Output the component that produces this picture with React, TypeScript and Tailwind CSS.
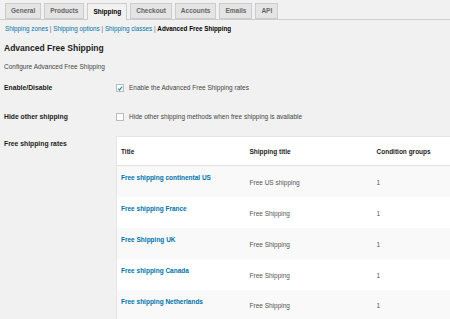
import React from "react";

const tabs = ["General", "Products", "Shipping", "Checkout", "Accounts", "Emails", "API"];

const rates = [
  { title: "Free shipping continental US", shipping: "Free US shipping", groups: 1 },
  { title: "Free shipping France", shipping: "Free Shipping", groups: 1 },
  { title: "Free Shipping UK", shipping: "Free Shipping", groups: 1 },
  { title: "Free shipping Canada", shipping: "Free Shipping", groups: 1 },
  { title: "Free shipping Netherlands", shipping: "Free Shipping", groups: 1 },
];

export default function App() {
  return (
    <div
      className="h-[319px] w-[450px] overflow-hidden bg-[#f1f1f1] text-[#333]"
      style={{ fontFamily: '"Liberation Sans", Arial, sans-serif' }}
    >
      {/* tabs */}
      <div className="flex items-end gap-[3px] border-b border-[#ccc] pl-[5px] pt-[3px]">
        {tabs.map((t) => (
          <div
            key={t}
            className={
              t === "Shipping"
                ? "-mb-px flex h-[17px] items-center border border-b-0 border-[#ccc] bg-[#f1f1f1] px-[5px] text-[6.5px] font-bold text-black"
                : "flex h-[16px] items-center border border-[#ccc] bg-[#e4e4e4] px-[5px] text-[6.5px] font-bold text-[#666]"
            }
          >
            {t}
          </div>
        ))}
      </div>

      {/* sub links */}
      <div className="mt-[4px] pl-[5px] text-[6.3px] leading-[10px] text-[#666]">
        <span className="text-[#0073aa]">Shipping zones</span> |{" "}
        <span className="text-[#0073aa]">Shipping options</span> |{" "}
        <span className="text-[#0073aa]">Shipping classes</span> |{" "}
        <span className="font-bold text-black">Advanced Free Shipping</span>
      </div>

      <h2 className="mt-[8px] pl-[4px] text-[8.5px] font-bold leading-[12px] text-[#222]">
        Advanced Free Shipping
      </h2>
      <p className="mt-[8px] pl-[4px] text-[6.5px] leading-[10px] text-[#444]">
        Configure Advanced Free Shipping
      </p>

      {/* settings */}
      <div className="mt-[11px] flex items-center">
        <div className="w-[116px] shrink-0 pl-[4px] text-[6.8px] font-bold text-[#222]">Enable/Disable</div>
        <div className="flex items-center gap-[5px] text-[6.5px] text-[#444]">
          <span className="flex h-[8px] w-[8px] items-center justify-center border border-[#bbb] bg-white">
            <svg viewBox="0 0 10 10" className="h-[7px] w-[7px]">
              <path d="M1.8 5.2 L4.2 7.6 L8.6 2" fill="none" stroke="#1e8cbe" strokeWidth="2" />
            </svg>
          </span>
          Enable the Advanced Free Shipping rates
        </div>
      </div>
      <div className="mt-[19px] flex items-center">
        <div className="w-[116px] shrink-0 pl-[4px] text-[6.8px] font-bold text-[#222]">Hide other shipping</div>
        <div className="flex items-center gap-[5px] text-[6.5px] text-[#444]">
          <span className="h-[8px] w-[8px] border border-[#bbb] bg-white" />
          Hide other shipping methods when free shipping is available
        </div>
      </div>

      <div className="mt-[14px] flex items-start">
        <div className="w-[116px] shrink-0 pl-[4px] pt-[3px] text-[6.8px] font-bold text-[#222]">Free shipping rates</div>
        <table className="w-[360px] shrink-0 border-collapse border border-[#e5e5e5] bg-white text-left">
          <thead>
            <tr className="h-[29px] border-b border-[#e1e1e1]">
              <th className="w-[133px] pl-[4px] text-[6.5px] font-bold text-[#222]">Title</th>
              <th className="w-[127px] text-[6.5px] font-bold text-[#222]">Shipping title</th>
              <th className="text-[6.5px] font-bold text-[#222]">Condition groups</th>
            </tr>
          </thead>
          <tbody>
            {rates.map((r, i) => (
              <tr key={r.title} className={i % 2 === 0 ? "h-[31px] bg-[#f9f9f9]" : "h-[31px] bg-white"}>
                <td className="pl-[4px] pt-[7px] align-top text-[6.5px] font-bold text-[#0073aa]">{r.title}</td>
                <td className="pt-[2px] text-[6.5px] text-[#555]">{r.shipping}</td>
                <td className="pt-[2px] text-[6.5px] text-[#555]">{r.groups}</td>
              </tr>
            ))}
          </tbody>
        </table>
      </div>
    </div>
  );
}
